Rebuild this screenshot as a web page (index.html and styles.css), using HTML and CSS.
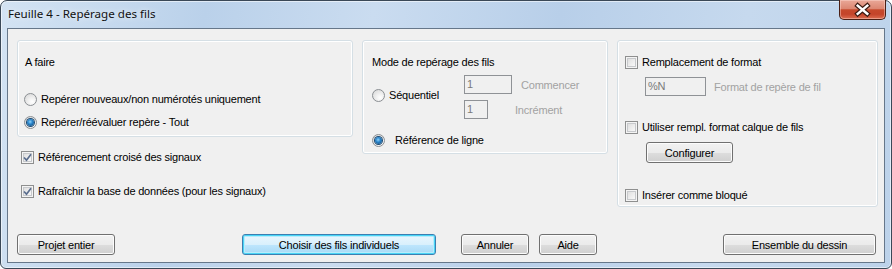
FILE: index.html
```html
<!DOCTYPE html>
<html lang="fr">
<head>
<meta charset="utf-8">
<title>Feuille 4 - Repérage des fils</title>
<link rel="stylesheet" href="styles.css">
</head>
<body>
<div class="window">
  <div class="titlebar">
    <span class="title">Feuille 4 - Repérage des fils</span>
    <div class="close">
      <svg width="47" height="19" viewBox="0 0 47 19">
        <path d="M18.5 5.5 L28.5 14 M28.5 5.5 L18.5 14" stroke="#3b1a12" stroke-width="5" stroke-linecap="square" fill="none"/>
        <path d="M18.5 5.5 L28.5 14 M28.5 5.5 L18.5 14" stroke="#ffffff" stroke-width="2.6" stroke-linecap="square" fill="none"/>
      </svg>
    </div>
  </div>
  <div class="client">
    <div class="main">
      <div class="col-left">
        <div class="group group-a">
          <div class="glabel">A faire</div>
          <div class="row first-radio"><span class="rb"></span><span class="txt">Repérer nouveaux/non numérotés uniquement</span></div>
          <div class="row second-radio"><span class="rb on"><span class="dot"></span></span><span class="txt">Repérer/réévaluer repère - Tout</span></div>
        </div>
        <div class="row cbrow cb-first"><span class="cb"><svg width="9" height="9" viewBox="0 0 9 9"><path d="M1 4.5 L3.5 7.2 L8 1.2" stroke="#5b6e8e" stroke-width="1.7" fill="none"/></svg></span><span class="txt">Référencement croisé des signaux</span></div>
        <div class="row cbrow cb-second"><span class="cb"><svg width="9" height="9" viewBox="0 0 9 9"><path d="M1 4.5 L3.5 7.2 L8 1.2" stroke="#5b6e8e" stroke-width="1.7" fill="none"/></svg></span><span class="txt">Rafraîchir la base de données (pour les signaux)</span></div>
      </div>

      <div class="group group-b">
        <div class="glabel">Mode de repérage des fils</div>
        <div class="seq">
          <div class="row seq-radio"><span class="rb"></span><span class="txt">Séquentiel</span></div>
          <div class="seq-fields">
            <div class="field-row">
              <span class="tbox w48">1</span><span class="dis start-lbl">Commencer</span>
            </div>
            <div class="field-row second">
              <span class="tbox w24">1</span><span class="dis inc-lbl">Incrément</span>
            </div>
          </div>
        </div>
        <div class="row ref-radio"><span class="rb on"><span class="dot"></span></span><span class="txt wide">Référence de ligne</span></div>
      </div>

      <div class="group group-c">
        <div class="row cbrow"><span class="cb"></span><span class="txt">Remplacement de format</span></div>
        <div class="field-row fmt">
          <span class="tbox w61">%N</span><span class="dis fmt-lbl">Format de repère de fil</span>
        </div>
        <div class="row cbrow calque"><span class="cb"></span><span class="txt">Utiliser rempl. format calque de fils</span></div>
        <button class="btn config">Configurer</button>
        <div class="row cbrow bloque"><span class="cb"></span><span class="txt">Insérer comme bloqué</span></div>
      </div>
    </div>

    <div class="buttons">
      <button class="btn b-projet">Projet entier</button>
      <button class="btn default b-choisir">Choisir des fils individuels</button>
      <button class="btn b-annuler">Annuler</button>
      <button class="btn b-aide">Aide</button>
      <button class="btn b-ensemble">Ensemble du dessin</button>
    </div>
  </div>
</div>
</body>
</html>
```

FILE: styles.css
```css
* { box-sizing: border-box; }

html, body {
  margin: 0;
  padding: 0;
  background: #ffffff;
}

body {
  font-family: "Liberation Sans", Arial, sans-serif;
  font-size: 11px;
  letter-spacing: -0.2px;
  color: #000;
}

.window {
  width: 892px;
  height: 269px;
  border: 1px solid #3a4857;
  border-radius: 7px 7px 6px 6px;
  padding: 0 6px 5px 6px;
  background: linear-gradient(100deg, #d3e3f3 0%, #bad1ea 22%, #cadcf0 40%, #b8cfe9 60%, #c6d9ee 80%, #bcd2ea 100%);
  box-shadow: inset 0 0 0 1px rgba(255,255,255,0.55);
  display: flex;
  flex-direction: column;
}

.titlebar {
  height: 27px;
  display: flex;
  align-items: flex-start;
}

.title {
  font-family: "Noto Sans", "Open Sans", sans-serif;
  font-size: 11.6px;
  letter-spacing: 0;
  color: #111;
  margin-top: 5px;
  margin-left: 1px;
  text-shadow: 0 0 6px rgba(255,255,255,0.9);
}

.close {
  margin-left: auto;
  margin-right: -1px;
  margin-top: -1px;
  width: 47px;
  height: 20px;
  border: 1px solid #4a1f14;
  border-top: none;
  border-radius: 0 0 5px 5px;
  background: linear-gradient(#e9a898 0%, #dc8772 45%, #c6492c 52%, #c4442a 75%, #dc6e52 100%);
  box-shadow: inset 0 0 0 1px rgba(255,220,210,0.45);
  display: flex;
}

.client {
  flex: 1;
  border: 1px solid #66778a;
  background: #f0f0f0;
  display: flex;
  flex-direction: column;
}

.main {
  display: flex;
  align-items: flex-start;
  padding: 11px 0 0 9px;
  height: 178px;
}

.group {
  border: 1px solid #d5dfe5;
  border-radius: 3px;
  box-shadow: inset 0 0 0 1px #ffffff;
  display: flex;
  flex-direction: column;
  align-items: flex-start;
}

.glabel {
  height: 13px;
  line-height: 13px;
}

.row {
  display: flex;
  align-items: center;
  height: 13px;
  line-height: 13px;
}

.txt { margin-left: 4px; white-space: nowrap; }
.txt.wide { margin-left: 10px; }

/* radio */
.rb {
  width: 13px;
  height: 13px;
  border-radius: 50%;
  border: 1px solid #8b8f93;
  background: radial-gradient(circle at 65% 70%, #ffffff 0%, #f1f1f1 35%, #d4d4d4 100%);
  display: flex;
  align-items: center;
  justify-content: center;
  flex: none;
}
.dot {
  width: 7px;
  height: 7px;
  border-radius: 50%;
  background: radial-gradient(circle at 45% 40%, #8fd3fb 0%, #2a86cc 40%, #0b3d6b 100%);
  box-shadow: 0 0 0 1px #1d4a72;
}

/* checkbox */
.cb {
  width: 13px;
  height: 13px;
  border: 1px solid #8e8f8f;
  background: linear-gradient(135deg, #d8d8d8 0%, #eeeeee 55%, #ffffff 100%);
  box-shadow: inset 0 0 0 1px #f4f4f4, inset 0 0 0 2px #c7c9cc;
  display: flex;
  align-items: center;
  justify-content: center;
  flex: none;
}

/* text boxes */
.field-row {
  display: flex;
  align-items: center;
  height: 19px;
}
.tbox {
  height: 19px;
  border: 1px solid #8f9296;
  background: #f0f0f0;
  color: #7a7a7a;
  padding-left: 2px;
  line-height: 17px;
  flex: none;
}
.w48 { width: 48px; }
.w24 { width: 24px; }
.w61 { width: 61px; }
.dis { color: #a2a2a2; white-space: nowrap; }

/* left column */
.col-left {
  width: 336px;
  display: flex;
  flex-direction: column;
}
.group-a {
  width: 336px;
  height: 97px;
  padding: 15px 0 0 7px;
}
.first-radio { margin-top: 24px; margin-left: -1px; }
.second-radio { margin-top: 10px; margin-left: -1px; }
.cbrow.cb-first { margin-top: 14px; margin-left: 4px; }
.cbrow.cb-second { margin-top: 21px; margin-left: 4px; }

/* middle */
.group-b {
  margin-left: 9px;
  width: 246px;
  height: 114px;
  padding: 15px 0 0 9px;
}
.seq {
  display: flex;
  align-items: flex-start;
  margin-top: 6px;
}
.seq-radio {
  width: 92px;
  margin-top: 14px;
}
.seq-fields {
  display: flex;
  flex-direction: column;
}
.field-row.second { margin-top: 6px; }
.start-lbl { margin-left: 9px; }
.inc-lbl { margin-left: 27px; }
.ref-radio { margin-top: 15px; }

/* right */
.group-c {
  margin-left: 9px;
  width: 261px;
  height: 167px;
  padding: 15px 0 0 7px;
}
.field-row.fmt { margin-top: 8px; margin-left: 20px; }
.fmt-lbl { margin-left: 8px; }
.calque { margin-top: 25px; }
.config {
  margin-top: 8px;
  margin-left: 21px;
  width: 87px;
  height: 20px;
}
.bloque { margin-top: 26px; }

/* buttons */
.btn {
  font-family: "Liberation Sans", Arial, sans-serif;
  font-size: 11px;
  letter-spacing: -0.2px;
  color: #000;
  height: 21px;
  padding: 0;
  border: 1px solid #707070;
  border-radius: 3px;
  background: linear-gradient(#f2f2f2 0%, #ebebeb 50%, #dddddd 51%, #cfcfcf 100%);
  box-shadow: inset 0 0 0 1px #fcfcfc;
  flex: none;
}
.btn.default {
  border-color: #3c7fb1;
  background: linear-gradient(#eaf6fd 0%, #d9f0fc 50%, #bee6fd 51%, #a7d9f5 100%);
  box-shadow: inset 0 0 0 1px #48d4f6, inset 0 0 0 2px #b8ecfb;
}

.buttons {
  display: flex;
  align-items: flex-start;
  padding-left: 9px;
  margin-top: 27px;
}
.b-projet { width: 98px; }
.b-choisir { width: 194px; margin-left: 127px; }
.b-annuler { width: 68px; margin-left: 25px; }
.b-aide { width: 58px; margin-left: 10px; }
.b-ensemble { width: 153px; margin-left: 126px; }
```
